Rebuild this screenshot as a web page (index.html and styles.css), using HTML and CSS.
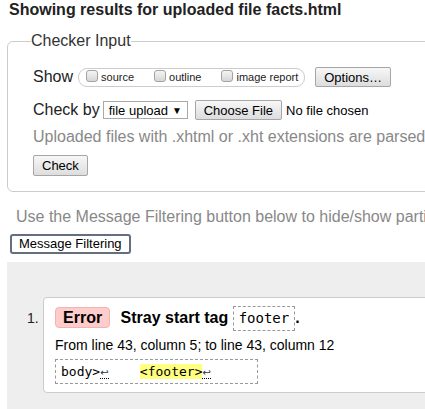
FILE: index.html
```html
<!DOCTYPE html>
<html lang="en">
<head>
<meta charset="utf-8">
<title>Showing results for uploaded file facts.html</title>
<link rel="stylesheet" href="styles.css">
</head>
<body>
<h2 class="title">Showing results for uploaded file facts.html</h2>
<fieldset class="checker">
  <legend class="legend">Checker Input</legend>
  <div class="row row-show">
    <span class="label">Show</span>
    <span class="opts">
      <span class="opt"><span class="cb"></span><span>source</span></span>
      <span class="opt"><span class="cb"></span><span>outline</span></span>
      <span class="opt"><span class="cb"></span><span>image report</span></span>
    </span>
    <span class="btn btn-options">Options…</span>
  </div>
  <div class="row row-by">
    <span class="label">Check by</span>
    <span class="select">file upload <span class="arrow">▼</span></span>
    <span class="btn btn-file">Choose File</span>
    <span class="nofile">No file chosen</span>
  </div>
  <p class="hint">Uploaded files with .xhtml or .xht extensions are parsed using the XML parser.</p>
  <div class="row row-check">
    <span class="btn btn-check">Check</span>
  </div>
</fieldset>
<p class="filter-hint">Use the Message Filtering button below to hide/show particular messages, and to see total counts of errors and warnings.</p>
<button class="filter-btn" type="button">Message Filtering</button>
<div class="results">
  <ol class="messages">
    <li class="item">
      <span class="num">1.</span>
      <div class="card">
        <p class="msg-head"><strong class="badge">Error</strong> <span class="msg-text">Stray start tag <code class="tag">footer</code>.</span></p>
        <p class="loc">From line 43, column 5; to line 43, column 12</p>
        <p class="extract"><code class="src">body&gt;<b class="lf">↩</b>    <mark class="hl">&lt;footer&gt;</mark><b class="lf">↩</b></code></p>
      </div>
    </li>
  </ol>
</div>
</body>
</html>
```

FILE: styles.css
```css
html {
  overflow: hidden;
}

body {
  margin: 0;
  width: 1000px;
  font-family: "Liberation Sans", Arial, sans-serif;
  color: #222;
  background: #fff;
}

.title {
  margin: 0;
  padding: 1px 0 0 9px;
  font-size: 16px;
  line-height: 18px;
  font-weight: bold;
  color: #222;
  white-space: nowrap;
}

.checker {
  margin: 13px 0 0 7px;
  padding: 0 0 15px 25px;
  border: 1px solid #ccc;
  border-radius: 6px;
  width: 900px;
  box-sizing: border-box;
  min-width: 0;
}

.legend {
  padding: 0;
  margin-left: -2px;
  font-size: 16px;
  line-height: 18px;
  color: #333;
}

.row {
  display: flex;
  align-items: center;
  white-space: nowrap;
  height: 20px;
}

.row-show {
  margin-top: 17px;
}

.row-by {
  margin-top: 13px;
}

.row-check {
  margin-top: 9px;
  height: 21px;
}

.label {
  font-size: 16px;
  line-height: 18px;
  color: #222;
}

.opts {
  display: flex;
  align-items: center;
  margin-left: 5px;
  height: 19px;
  padding: 0 6px 0 7px;
  border: 1px solid #ccc;
  border-radius: 9px;
  box-sizing: border-box;
}

.opt {
  display: flex;
  align-items: center;
  font-size: 11px;
  color: #222;
}

.opt + .opt {
  margin-left: 20px;
}

.cb {
  width: 12px;
  height: 12px;
  margin: 0 3px 2px 0;
  border: 1px solid #a3a3a3;
  border-radius: 3px;
  background: linear-gradient(#f4f4f4, #d6d6d6);
  box-sizing: border-box;
}

.btn {
  display: inline-flex;
  align-items: center;
  height: 20px;
  padding: 0 8px;
  border: 1px solid #a6a6a6;
  border-radius: 2px;
  background: linear-gradient(#f7f7f7, #dddddd);
  box-sizing: border-box;
  font-size: 13px;
  color: #000;
}

.btn-options {
  margin-left: 10px;
}

.btn-file {
  margin-left: 7px;
}

.btn-check {
  height: 21px;
}

.select {
  display: inline-flex;
  align-items: center;
  width: 85px;
  height: 18px;
  margin-left: 3px;
  padding: 0 0 0 5px;
  border: 1px solid #a9a9a9;
  background: #fff;
  box-sizing: border-box;
  font-size: 13px;
  color: #000;
}

.arrow {
  margin-left: 4px;
  font-size: 10px;
}

.nofile {
  margin-left: 4px;
  font-size: 13px;
  color: #000;
}

.hint {
  margin: 8px 0 0;
  font-size: 16px;
  line-height: 18px;
  color: #888;
  white-space: nowrap;
}

.filter-hint {
  margin: 16px 0 0 16px;
  font-size: 16px;
  line-height: 18px;
  color: #888;
  white-space: nowrap;
}

.filter-btn {
  display: block;
  margin: 8px 0 0 10px;
  height: 20px;
  padding: 0 7px;
  border: 2px solid #646e7e;
  border-radius: 3px;
  background: #fff;
  font-family: "Liberation Sans", Arial, sans-serif;
  font-size: 13px;
  line-height: 14px;
  color: #000;
}

.results {
  margin: 8px 0 0 7px;
  padding: 35px 0 40px;
  background: #eee;
}

.messages {
  margin: 0;
  padding: 0;
  list-style: none;
}

.item {
  display: flex;
  align-items: baseline;
}

.num {
  width: 36px;
  padding-left: 20px;
  box-sizing: border-box;
  font-size: 14px;
  color: #222;
}

.card {
  width: 900px;
  padding: 8px 0 8px 11px;
  border: 1px solid #ccc;
  border-radius: 4px;
  background: #fff;
  box-sizing: border-box;
}

.msg-head {
  margin: 0;
  font-size: 16px;
  white-space: nowrap;
  font-weight: bold;
  color: #000;
}

.badge {
  display: inline-block;
  margin-right: 6px;
  padding: 1px 7px;
  line-height: 17px;
  border: 1px solid #f0b4b4;
  border-radius: 4px;
  background: #fcc;
  color: #000;
}

.tag {
  display: inline-block;
  padding: 3px 5px;
  line-height: 17px;
  border: 1px dashed #999;
  font-family: "DejaVu Sans Mono", monospace;
  font-size: 14px;
  font-weight: normal;
  color: #000;
}

.loc {
  margin: 6px 0 0;
  font-size: 14px;
  line-height: 16px;
  color: #000;
  white-space: nowrap;
}

.extract {
  margin: 6px 0 0;
  width: 203px;
  padding: 2px 5px;
  border: 1px dashed #999;
  box-sizing: border-box;
}

.src {
  font-family: "DejaVu Sans Mono", monospace;
  font-size: 13px;
  line-height: 17px;
  white-space: pre;
  color: #000;
}

.lf {
  font-family: "DejaVu Sans", sans-serif;
  font-size: 10px;
  font-weight: normal;
  color: #333;
  border-bottom: 1px dotted #000;
}

.hl {
  background: #ffff80;
  color: #000;
}
```
